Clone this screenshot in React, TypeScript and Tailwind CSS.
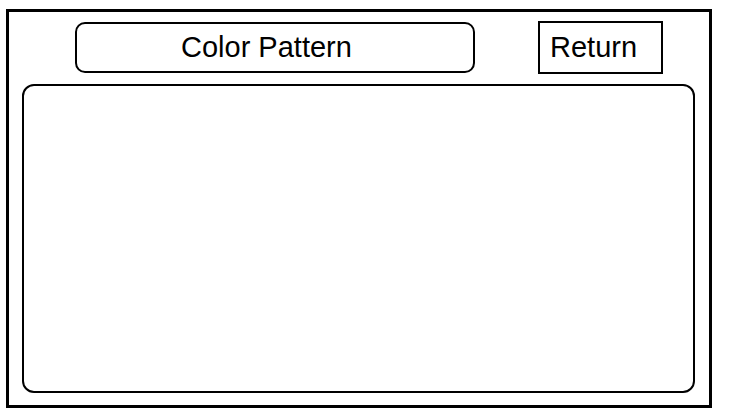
import React from 'react';

export default function App() {
    return (
        <div className="w-[736px] h-[416px] bg-white overflow-hidden pt-[9px] pl-[6px]" style={{ fontFamily: '"Liberation Sans", Arial, sans-serif' }}>
            {/* Frame */}
            <div className="w-[706px] h-[399px] border-[3px] border-black flex flex-col pt-[9px] pl-[13px] pr-[14px] pb-[12px]">
                {/* Header */}
                <div className="h-[53px] flex items-center">
                    <div className="ml-[53px] w-[400px] h-[51px] border-2 border-black rounded-[10px] flex items-center pl-[104px]">
                        <span className="text-[29px] leading-none text-black">Color Pattern</span>
                    </div>
                    <button className="ml-[63px] w-[125px] h-[53px] border-2 border-black flex items-center pl-[10px]">
                        <span className="text-[29px] leading-none text-black">Return</span>
                    </button>
                </div>

                {/* Pattern area */}
                <div className="mt-[10px] flex-1 border-2 border-black rounded-[12px]" />
            </div>
        </div>
    );
}
